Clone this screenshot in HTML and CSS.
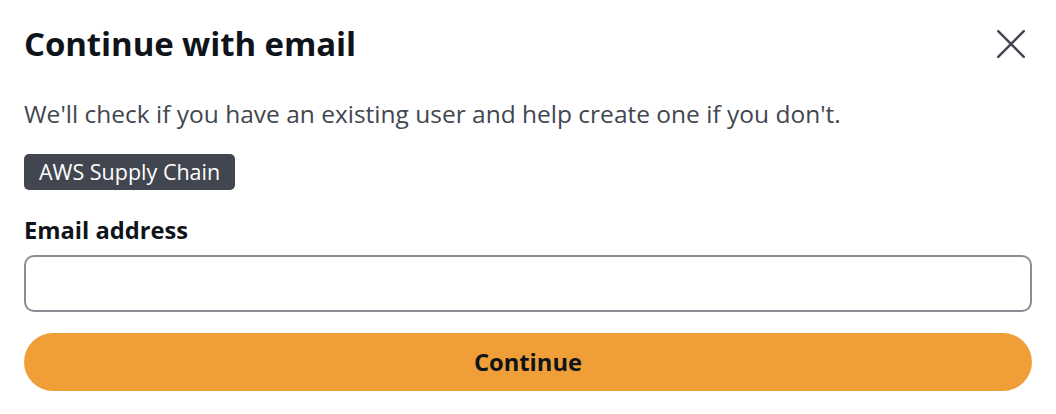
FILE: index.html
```html
<!DOCTYPE html>
<html lang="en">
<head>
<meta charset="utf-8">
<link rel="stylesheet" href="styles.css">
</head>
<body>
<div class="dialog">
  <div class="header">
    <h1 class="title">Continue with email</h1>
    <button class="close" aria-label="Close">
      <svg width="28" height="28" viewBox="0 0 28 28"><path d="M1.2 1.2 L26.8 26.8 M26.8 1.2 L1.2 26.8" stroke="#424650" stroke-width="2.4" stroke-linecap="round" fill="none"/></svg>
    </button>
  </div>
  <p class="desc">We'll check if you have an existing user and help create one if you don't.</p>
  <div class="badge-row"><span class="badge">AWS Supply Chain</span></div>
  <label class="label" for="email">Email address</label>
  <input class="input" id="email" type="email">
  <button class="primary">Continue</button>
</div>
</body>
</html>
```
FILE: styles.css
```css
* { box-sizing: border-box; }
html, body { margin: 0; padding: 0; background: #fff; }
body { font-family: "Open Sans", "Noto Sans", sans-serif; color: #0f141a; }
.dialog { padding: 22px 24px 24px; display: flex; flex-direction: column; }
.header { display: flex; justify-content: space-between; align-items: center; height: 44px; }
.title { margin: 0; font-size: 33px; font-weight: 700; line-height: 44px; letter-spacing: -0.1px; }
.close { background: none; border: 0; padding: 0; width: 28px; height: 28px; margin-right: 7px; display: flex; align-items: center; justify-content: center; }
.desc { margin: 32px 0 0; font-size: 24.5px; line-height: 32px; color: #414750; }
.badge-row { margin-top: 24px; display: flex; }
.badge { background: #424650; color: #fff; font-size: 21.5px; line-height: 36px; height: 36px; padding: 0 15px; border-radius: 5px; }
.label { margin-top: 24px; font-size: 23.7px; font-weight: 700; line-height: 32px; }
.input { margin-top: 9px; height: 57px; width: 100%; border: 2px solid #8c8c94; border-radius: 10px; font-size: 20px; padding: 0 16px; }
.primary { margin-top: 21px; height: 58px; width: 100%; border: 0; border-radius: 29px; background: #f09e38; color: #0f141a; font-family: inherit; font-size: 23.7px; font-weight: 700; }
```
